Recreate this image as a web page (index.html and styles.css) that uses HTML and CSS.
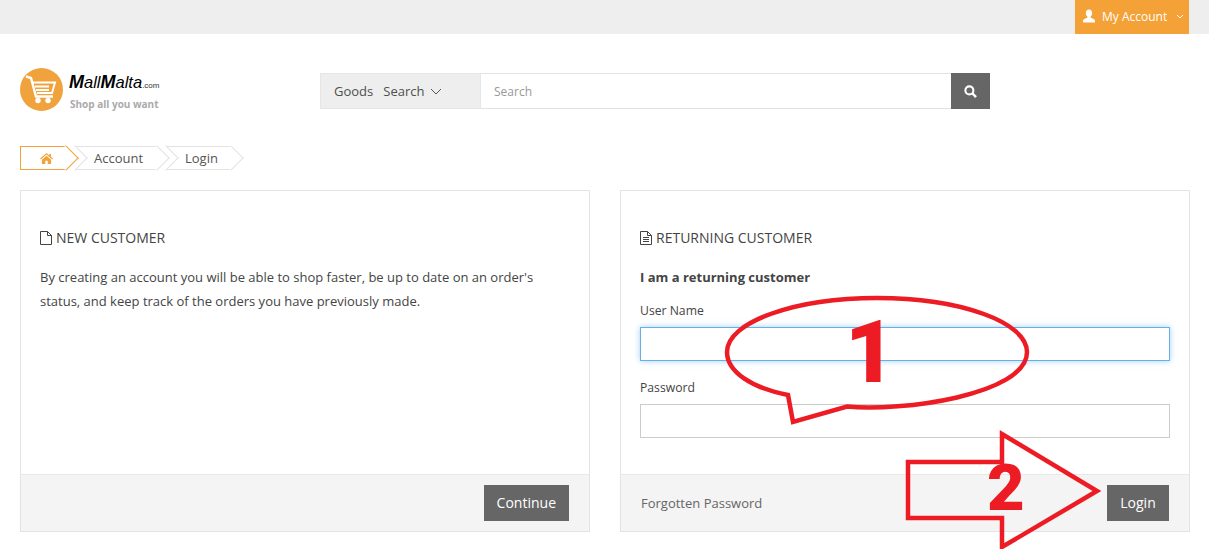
FILE: index.html
```html
<!DOCTYPE html>
<html lang="en">
<head>
  <meta charset="UTF-8" />
  <meta name="viewport" content="width=device-width, initial-scale=1.0" />
  <title>Account Login</title>
  <link rel="stylesheet" href="styles.css">
</head>
<body>
  <div class="topbar">
    <a class="account-btn" href="#">
      <svg class="user-icon" viewBox="0 0 14 14"><path fill="#fff" d="M7 0.5c2 0 3.2 1.5 3.2 3.6 0 1.500-.6 2.800-1.500 3.500-.3.6-.1 1.200.5 1.500 1.700.7 3.800 1.200 3.800 3v1.400H1v-1.400c0-1.800 2.100-2.300 3.800-3 .6-.3.8-.9.5-1.500C4.400 6.900 3.800 5.600 3.800 4.100 3.800 2 5 .5 7 .5z"/></svg>
      <span>My Account</span>
      <svg class="caret-small" viewBox="0 0 8 5"><path d="M1 1l3 3 3-3" fill="none" stroke="#fff" stroke-width="1"/></svg>
    </a>
  </div>

  <div class="header">
    <div class="logo">
      <svg class="logo-mark" viewBox="0 0 43 43">
        <circle cx="21.500" cy="21.500" r="21.500" fill="#f0a33c"/>
        <path d="M6 8.500l5 1.500 5 18.500h17" fill="none" stroke="#fff" stroke-width="2.400"/>
        <path d="M13 14.500h22l-3 10.500H17M15 18.500h14M16 22h13" fill="none" stroke="#fff" stroke-width="2"/>
        <circle cx="18" cy="32.500" r="2.700" fill="#fff"/>
        <circle cx="28" cy="32.500" r="2.700" fill="#fff"/>
      </svg>
      <div class="logo-text">
        <div class="logo-name"><b>M</b>all<b>M</b>alta<small>.com</small></div>
        <div class="logo-tag">Shop all you want</div>
      </div>
    </div>
    <div class="search">
      <div class="search-type">
        <span>Goods</span><span>Search</span>
        <svg class="caret" viewBox="0 0 12 7"><path d="M1 1l5 5 5-5" fill="none" stroke="#555" stroke-width="1"/></svg>
      </div>
      <input class="search-input" type="text" placeholder="Search">
      <button class="search-btn">
        <svg viewBox="0 0 14 14" width="13" height="13"><circle cx="5.800" cy="5.800" r="4.300" fill="none" stroke="#fff" stroke-width="2.200"/><path d="M9 9l4 4" stroke="#fff" stroke-width="2.600"/></svg>
      </button>
    </div>
  </div>

  <div class="breadcrumb">
    <a class="crumb crumb-home" href="#">
      <svg viewBox="0 0 14 12" width="13" height="11"><path fill="#f0a33c" d="M7 0l3 2.600V1h1.800v3.200L14 6.100l-.8.900L7 1.700.8 7 0 6.100zM2 7.300L7 3l5 4.300V12H8.300V8.500H5.700V12H2z"/></svg>
    </a>
    <a class="crumb" href="#">Account</a>
    <a class="crumb" href="#">Login</a>
  </div>

  <div class="panels">
    <div class="panel">
      <div class="panel-body">
        <h2 class="panel-title">
          <svg class="file-icon" viewBox="0 0 12 14"><path d="M.5.500h7l4 4v9H.5zM7.500.500v4h4" fill="none" stroke="#444"/></svg>
          New Customer
        </h2>
        <p class="panel-text">By creating an account you will be able to shop faster, be up to date on an order's status, and keep track of the orders you have previously made.</p>
      </div>
      <div class="panel-foot">
        <span></span>
        <a class="btn" href="#">Continue</a>
      </div>
    </div>

    <div class="panel">
      <div class="panel-body">
        <h2 class="panel-title">
          <svg class="file-icon" viewBox="0 0 12 14"><path d="M.5.500h7l4 4v9H.5zM7.500.500v4h4M3 6.500h6M3 8.500h6M3 10.500h6" fill="none" stroke="#444"/></svg>
          Returning Customer
        </h2>
        <p class="panel-text panel-lead">I am a returning customer</p>
        <label class="field-label" for="username">User Name</label>
        <input class="field field-focus" id="username" type="text">
        <label class="field-label" for="password">Password</label>
        <input class="field" id="password" type="password">
      </div>
      <div class="panel-foot">
        <a class="forgot" href="#">Forgotten Password</a>
        <a class="btn" href="#">Login</a>
      </div>
    </div>
  </div>

  <!-- red annotations drawn on top of the screenshot -->
  <svg class="marks" viewBox="0 0 1209 549" width="1209" height="549">
    <path d="M847 406.500C900 412 1027 395 1027 352C1027 322 960 298 877 298C795 298 727 322 727 352C727 372 752 388 788 395L793 422z" fill="none" stroke="#ed1c24" stroke-width="4.500"/>
    <path d="M908 462H1002V434L1097 491L1002 547V518H908z" fill="none" stroke="#ed1c24" stroke-width="4.500"/>
  </svg>
  <span class="mark-num mark-one">1</span>
  <span class="mark-num mark-two">2</span>
</body>
</html>
```

FILE: styles.css
```css
* {
  box-sizing: border-box;
}
html, body {
  height: 549px;
  overflow: hidden;
}
body {
  margin: 0;
  position: relative;
  background: #fff;
  color: #444;
  font-family: "Open Sans", Arial, sans-serif;
  font-size: 13px;
}
a {
  color: inherit;
  text-decoration: none;
}
.topbar {
  height: 34px;
  padding-right: 20px;
  background: #eee;
  display: flex;
  justify-content: flex-end;
}
.account-btn {
  width: 114px;
  padding: 0 0 2px 7px;
  background: #f4a137;
  color: #fff;
  font-size: 12px;
  display: flex;
  align-items: center;
  gap: 6px;
}
.user-icon {
  width: 14px;
  height: 14px;
}
.caret-small {
  width: 8px;
  height: 5px;
  margin-left: 3px;
}
.header {
  height: 112px;
  padding: 34px 0 0 20px;
  display: flex;
  align-items: flex-start;
}
.logo {
  width: 300px;
  display: flex;
  align-items: center;
  gap: 6px;
}
.logo-mark {
  width: 43px;
  height: 43px;
  flex: none;
}
.logo-text {
  padding-top: 3px;
}
.logo-name {
  color: #000;
  font-family: "Liberation Sans", Arial, sans-serif;
  font-size: 16.500px;
  font-style: italic;
  line-height: 18px;
}
.logo-name b {
  font-size: 18px;
}
.logo-name small {
  font-size: 8px;
  font-style: normal;
  color: #333;
}
.logo-tag {
  margin-top: 3px;
  padding-left: 1px;
  color: #aaa;
  font-size: 10px;
  font-weight: 700;
  line-height: 12px;
}
.search {
  width: 670px;
  height: 36px;
  margin-top: 5px;
  display: flex;
}
.search-type {
  width: 161px;
  padding-left: 13px;
  background: #eee;
  border: 1px solid #e6e6e6;
  display: flex;
  align-items: center;
  gap: 10px;
  color: #4f4f4f;
}
.caret {
  width: 12px;
  height: 7px;
  margin-left: -4px;
}
.search-input {
  flex: 1;
  padding: 0 13px;
  border: 1px solid #e2e2e2;
  border-left: 0;
  border-right: 0;
  font: 12px "Open Sans", Arial, sans-serif;
  outline: none;
}
.search-input::placeholder {
  color: #999;
}
.search-btn {
  width: 39px;
  border: none;
  background: #666;
  display: flex;
  align-items: center;
  justify-content: center;
}
.breadcrumb {
  height: 24px;
  padding-left: 20px;
  display: flex;
}
.crumb {
  position: relative;
  height: 24px;
  width: 83px;
  margin-left: 7px;
  padding-left: 20px;
  background: #fff;
  border: 1px solid #e3e3e3;
  border-left: 0;
  border-right: 0;
  line-height: 23px;
  color: #555;
}
/* arrow on the right of each step */
.crumb::after {
  content: "";
  position: absolute;
  top: 2px;
  right: -8px;
  width: 17px;
  height: 17px;
  background: #fff;
  border: 1px solid #e3e3e3;
  border-left: 0;
  border-bottom: 0;
  transform: rotate(45deg);
  z-index: 1;
}
/* notch on the left, cut by the step before */
.crumb::before {
  content: "";
  position: absolute;
  top: 2px;
  left: -8px;
  width: 17px;
  height: 17px;
  background: #fff;
  border: 1px solid #e3e3e3;
  border-left: 0;
  border-bottom: 0;
  transform: rotate(45deg);
}
.crumb-home {
  width: 47px;
  margin-left: 0;
  padding-left: 19px;
  border-color: #f0a33c;
  border-left: 1px solid #f0a33c;
  display: flex;
  align-items: center;
  z-index: 3;
}
.crumb-home::before {
  display: none;
}
.crumb-home::after {
  border-color: #f0a33c;
}
.crumb:nth-child(2) {
  width: 84px;
  padding-left: 20px;
  z-index: 2;
}
.crumb:nth-child(3) {
  width: 67px;
  padding-left: 20px;
  z-index: 1;
}
.panels {
  margin-top: 20px;
  padding: 0 19px 0 20px;
  display: flex;
  gap: 30px;
}
.panel {
  flex: 1;
  height: 342px;
  border: 1px solid #e3e3e3;
  display: flex;
  flex-direction: column;
}
.panel-body {
  flex: 1;
  padding: 37px 19px 0;
}
.panel-title {
  margin: 0;
  font-size: 14px;
  font-weight: 400;
  line-height: 19px;
  text-transform: uppercase;
  display: flex;
  align-items: center;
  gap: 4px;
}
.file-icon {
  width: 12px;
  height: 14px;
}
.panel-text {
  margin: 18px 0 0;
  line-height: 24px;
}
.panel-lead {
  font-weight: 700;
  line-height: 24px;
}
.field-label {
  display: block;
  margin-top: 13px;
  line-height: 18px;
  font-size: 12.200px;
}
.field {
  display: block;
  width: 530px;
  height: 34px;
  margin: 7px 0 0;
  border: 1px solid #ccc;
  outline: none;
}
.field + .field-label {
  margin-top: 18px;
}
.field-focus {
  border-color: #66afe9;
  box-shadow: 0 0 6px rgba(102, 175, 233, 0.6);
}
.panel-foot {
  height: 57px;
  padding: 0 20px;
  background: #f4f4f4;
  border-top: 1px solid #e8e8e8;
  display: flex;
  align-items: center;
  justify-content: space-between;
}
.forgot {
  color: #666;
}
.btn {
  height: 36px;
  min-width: 62px;
  padding: 0 13px;
  background: #666;
  color: #fff;
  font-size: 14px;
  line-height: 35px;
  text-align: center;
}
.marks {
  position: absolute;
  top: 0;
  left: 0;
  pointer-events: none;
}
.mark-num {
  position: absolute;
  color: #ed1c24;
  font-family: Roboto, Arial, sans-serif;
  font-weight: 900;
  line-height: 1;
}
.mark-one {
  left: 845px;
  top: 309px;
  font-size: 87px;
}
.mark-two {
  left: 987px;
  top: 456px;
  font-size: 65px;
}
```
